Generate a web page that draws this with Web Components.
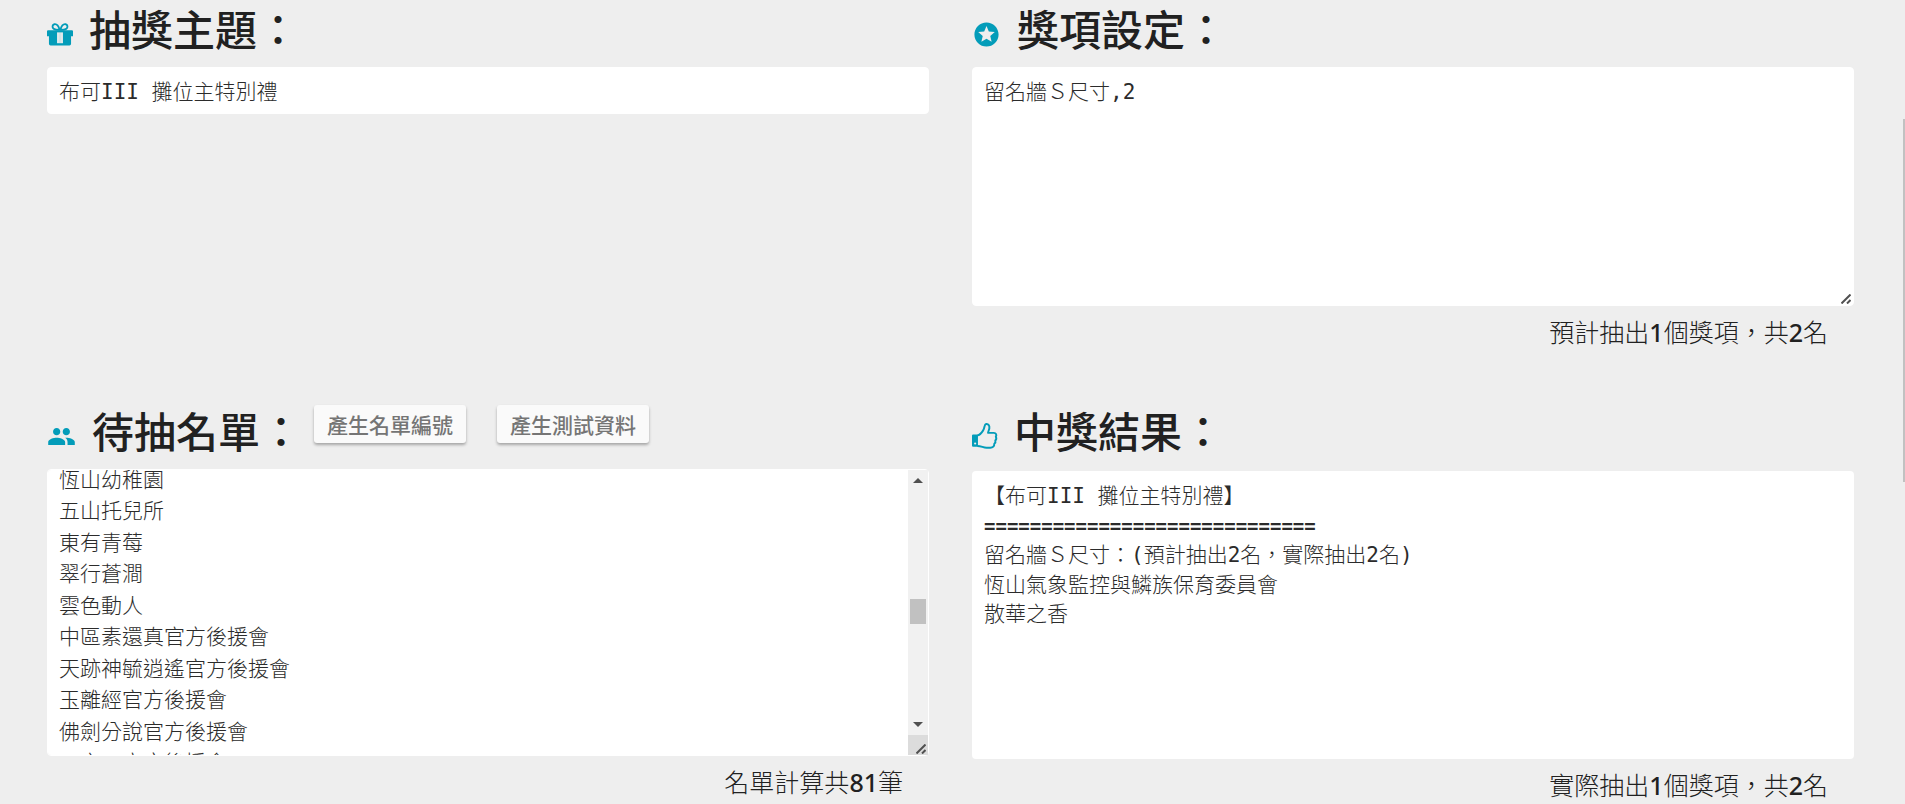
<!DOCTYPE html>
<html lang="zh-Hant">
<head>
<meta charset="utf-8">
<title>抽獎</title>
<style>
	html { height: 100%; }
	body {
		margin: 0;
		min-height: 100%;
		background: #eeeeee;
		color: #212121;
		overflow: hidden;
		font-family: "DejaVu Sans Mono", "Noto Sans CJK TC", monospace;
	}
</style>
</head>
<body>
<lottery-page></lottery-page>
<script>
const ICONS = {
	gift: `<path d="M11.700 8.200C10.600 4.400 8.600 2.600 6.700 3 4.800 3.400 4.600 6 6.100 7.200c1.300 1 3.400 1 5.600 1Zm.6 0c1.100-3.800 3.100-5.600 5-5.200 1.900.4 2.100 3 .6 4.200-1.300 1-3.400 1-5.600 1Z" fill="none" stroke="currentColor" stroke-width="1.700"/><path d="M1 8.500h22a1 1 0 0 1 1 1V14h-1.800v7a1.500 1.500 0 0 1-1.500 1.500H3.300A1.500 1.500 0 0 1 1.800 21v-7H0V9.500a1 1 0 0 1 1-1Z"/><path d="M9.300 10.500h5.400v10H9.300Z" fill="#eee"/><path d="M10.600 10.500h2.800v10h-2.800Z" opacity=".12"/>`,
	star: `<path d="M11.990 2C6.470 2 2 6.480 2 12s4.470 10 9.990 10C17.520 22 22 17.520 22 12S17.520 2 11.990 2zm4.240 16L12 15.450 7.770 18l1.120-4.810-3.730-3.230 4.920-.42L12 5l1.920 4.530 4.920.42-3.730 3.230L16.230 18z"/>`,
	group: `<path d="M16 11c1.660 0 2.990-1.340 2.990-3S17.660 5 16 5c-1.660 0-3 1.340-3 3s1.340 3 3 3zm-8 0c1.660 0 2.990-1.340 2.990-3S9.660 5 8 5C6.340 5 5 6.340 5 8s1.340 3 3 3zm0 2c-2.330 0-7 1.170-7 3.500V19h14v-2.500c0-2.330-4.670-3.500-7-3.500zm8 0c-.29 0-.62.020-.97.050 1.160.84 1.970 1.970 1.970 3.450V19h6v-2.500c0-2.330-4.670-3.500-7-3.500z"/>`,
	thumb: `<path d="M0 11.500a1 1 0 0 1 1-1h4.500V22H1a1 1 0 0 1-1-1Z"/><path d="M5 11.400c2.200-.2 4.300-3 5.300-4.600 1.600-2.400.9-5.600 2.700-5.900 2.500-.3 3.300 1.900 3 4-.2 1.500-1 2.600-1.200 4.200h5.400c2 0 2.800 2 1.800 3.500.7 1.300.5 2.600-.5 3.500.4 1.200 0 2.300-.9 3 .1 2.400-1.300 3.700-3.700 3.700h-3.500c-3 0-4.800-1.600-8.400-1.600" fill="none" stroke="currentColor" stroke-width="1.800" stroke-linejoin="round"/><circle cx="2.900" cy="18.900" r="1" fill="#eee"/>`
};

// coloured glyph in front of every section title
class LotteryIcon extends HTMLElement {
	constructor() {
		super();
		this.attachShadow({ mode: "open" });
	}
	connectedCallback() {
		this.shadowRoot.innerHTML = `
			<style>
			:host { display: block; flex: none; color: #039cb9; }
			svg { display: block; width: 26px; height: 26px; fill: currentColor; overflow: visible; }
			:host([name="star"]) svg, :host([name="group"]) svg { width: 29px; height: 29px; }
			</style>
			<svg viewBox="0 0 24 24" aria-hidden="true">${ICONS[this.getAttribute("name")]}</svg>
		`;
	}
}

class LotteryButton extends HTMLElement {
	constructor() {
		super();
		this.attachShadow({ mode: "open" });
		this.shadowRoot.innerHTML = `
			<style>
			:host { display: block; }
			button {
				display: block;
				height: 38px;
				padding: 0 13px;
				border: none;
				border-radius: 3px;
				background: #fafafa;
				color: #757575;
				box-shadow: 0 2px 3px rgba(0, 0, 0, 0.3);
				font: 500 21px/34px "Noto Sans CJK TC", sans-serif;
				white-space: nowrap;
				cursor: pointer;
			}
			button:hover { background: #ffffff; }
			</style>
			<button type="button"><slot></slot></button>
		`;
	}
}

class LotterySection extends HTMLElement {
	constructor() {
		super();
		this.attachShadow({ mode: "open" });
	}
	connectedCallback() {
		this.shadowRoot.innerHTML = `
			<style>
			:host { display: block; min-width: 0; }
			header { display: flex; align-items: center; height: 60px; }
			lottery-icon { margin: 8px 16px 0 0; }
			h2 {
				margin: 0;
				padding-bottom: 4px;
				font: 500 42px/56px "Noto Sans CJK TC", sans-serif;
				white-space: nowrap;
			}
			.actions { display: flex; gap: 31px; margin: 0 0 16px 12px; }
			.field { margin-top: 7px; }
			.summary {
				margin: 8px 26px 0 0;
				text-align: right;
				font: 300 25px/36px "Noto Sans", "Noto Sans CJK TC", sans-serif;
			}
			b { font-weight: 500; }
			</style>
			<header>
				<lottery-icon name="${this.getAttribute("icon")}"></lottery-icon>
				<h2>${this.getAttribute("heading")}</h2>
				<div class="actions"><slot name="actions"></slot></div>
			</header>
			<div class="field"><slot></slot></div>
			<div class="summary"><slot name="summary"></slot></div>
		`;
	}
}

class LotteryField extends HTMLElement {
	constructor() {
		super();
		this.attachShadow({ mode: "open" });
	}
	connectedCallback() {
		const type = this.getAttribute("type");
		const label = this.getAttribute("label");
		this.shadowRoot.innerHTML = `
			<style>
			:host { display: block; position: relative; }
			input, textarea {
				display: block;
				box-sizing: border-box;
				width: 100%;
				margin: 0;
				border: 1px solid #ffffff;
				border-radius: 4px;
				outline: none;
				background: #ffffff;
				color: #2b2b2b;
				font: 300 21px/1.5 "DejaVu Sans Mono", "Noto Sans CJK TC", monospace;
			}
			input { height: 47px; padding: 0 11px 2px; }
			textarea { padding: 9px 11px; resize: vertical; scrollbar-width: none; }
			textarea::-webkit-resizer { background: transparent; }
			textarea.prizes { height: 239px; }
			textarea.names { height: 287px; overflow-y: scroll; padding-right: 31px; }
			/* bar and grip lie over the right edge of the text box */
			.bar {
				position: absolute;
				top: 1px;
				right: 1px;
				bottom: 1px;
				width: 20px;
				display: flex;
				flex-direction: column;
				background: #f1f1f1;
				pointer-events: none;
			}
			.bar svg { flex: none; width: 20px; height: 20px; fill: #505050; }
			.track { flex: 1; }
			.handle { height: 25px; margin: 108px 2px 0; background: #c1c1c1; }
			.corner { height: 20px; background: #dcdcdc; }
			.grip {
				position: absolute;
				right: 3px;
				bottom: 2px;
				width: 10px;
				height: 10px;
				fill: none;
				stroke: #505050;
				stroke-width: 2;
				pointer-events: none;
			}
			</style>
			${type === "text"
				? `<input type="text" aria-label="${label}">`
				: `<textarea class="${type}" aria-label="${label}" spellcheck="false"></textarea>`}
			${type === "names" ? `
				<div class="bar">
					<svg viewBox="0 0 20 20"><path d="M5 13 10 8l5 5Z"/></svg>
					<div class="track"><div class="handle"></div></div>
					<svg viewBox="0 0 20 20"><path d="M5 7l5 5 5-5Z"/></svg>
					<div class="corner"></div>
				</div>` : ""}
			${type === "text" ? "" : `<svg class="grip" viewBox="0 0 10 10"><path d="M.5 9.500l9-9M6 9.500 9.500 6"/></svg>`}
		`;
		this.control = this.shadowRoot.querySelector("input, textarea");
		this.control.value = this.getAttribute("value") || "";
	}
	show(text, top) {
		this.control.value = text;
		this.control.scrollTop = top;
		const handle = this.shadowRoot.querySelector(".handle");
		this.control.addEventListener("scroll", () => {
			const range = this.control.scrollHeight - this.control.clientHeight;
			const room = handle.parentNode.clientHeight - handle.offsetHeight;
			handle.style.marginTop = Math.round(this.control.scrollTop / range * room) + "px";
		});
	}
}

class LotteryResult extends HTMLElement {
	constructor() {
		super();
		this.attachShadow({ mode: "open" });
		this.shadowRoot.innerHTML = `
			<style>
			:host {
				display: block;
				box-sizing: border-box;
				min-height: 288px;
				margin-top: 9px;
				padding: 11px 12px;
				border-radius: 4px;
				background: #ffffff;
				color: #2b2b2b;
				font: 300 21px/1.4 "DejaVu Sans Mono", "Noto Sans CJK TC", monospace;
			}
			</style>
			<slot></slot>
		`;
	}
}

class LotteryPage extends HTMLElement {
	constructor() {
		super();
		this.attachShadow({ mode: "open" });
		this.shadowRoot.innerHTML = `
			<style>
			:host { display: block; position: relative; }
			main {
				display: grid;
				grid-template-columns: 1fr 1fr;
				column-gap: 43px;
				row-gap: 52px;
				padding: 0 51px 0 47px;
			}
			b { font-weight: 500; }
			.rule { font-size: 19px; line-height: 30px; font-weight: bold; }
			/* page scroll indicator */
			.thumb {
				position: absolute;
				top: 119px;
				right: 0;
				width: 2px;
				height: 363px;
				background: #c1c1c1;
			}
			</style>
			<main>
				<lottery-section icon="gift" heading="抽獎主題：">
					<lottery-field type="text" label="抽獎主題" value="布可III 攤位主特別禮"></lottery-field>
				</lottery-section>
				<lottery-section icon="star" heading="獎項設定：">
					<lottery-field type="prizes" label="獎項設定" value="留名牆Ｓ尺寸,2"></lottery-field>
					<span slot="summary">預計抽出<b>1</b>個獎項，共<b>2</b>名</span>
				</lottery-section>
				<lottery-section icon="group" heading="待抽名單：">
					<lottery-button slot="actions">產生名單編號</lottery-button>
					<lottery-button slot="actions">產生測試資料</lottery-button>
					<lottery-field id="names" type="names" label="待抽名單"></lottery-field>
					<span slot="summary">名單計算共<b>81</b>筆</span>
				</lottery-section>
				<lottery-section icon="thumb" heading="中獎結果：">
					<lottery-result>
						<div>【布可III 攤位主特別禮】</div>
						<div class="rule">=============================</div>
						<div>留名牆Ｓ尺寸：(預計抽出2名，實際抽出2名)</div>
						<div>恆山氣象監控與鱗族保育委員會</div>
						<div>散華之香</div>
					</lottery-result>
					<span slot="summary">實際抽出<b>1</b>個獎項，共<b>2</b>名</span>
				</lottery-section>
			</main>
			<div class="thumb"></div>
		`;
	}
	connectedCallback() {
		const names = [
			"恆山幼稚園",
			"五山托兒所",
			"東有青莓",
			"翠行蒼澗",
			"雲色動人",
			"中區素還真官方後援會",
			"天跡神毓逍遙官方後援會",
			"玉離經官方後援會",
			"佛劍分說官方後援會",
			"三之一官方後援會"
		];
		const list = "\n".repeat(39) + names.join("\n") + "\n".repeat(32);
		this.shadowRoot.getElementById("names").show(list, 1243);
	}
}

customElements.define("lottery-icon", LotteryIcon);
customElements.define("lottery-button", LotteryButton);
customElements.define("lottery-section", LotterySection);
customElements.define("lottery-field", LotteryField);
customElements.define("lottery-result", LotteryResult);
customElements.define("lottery-page", LotteryPage);
</script>
</body>
</html>
